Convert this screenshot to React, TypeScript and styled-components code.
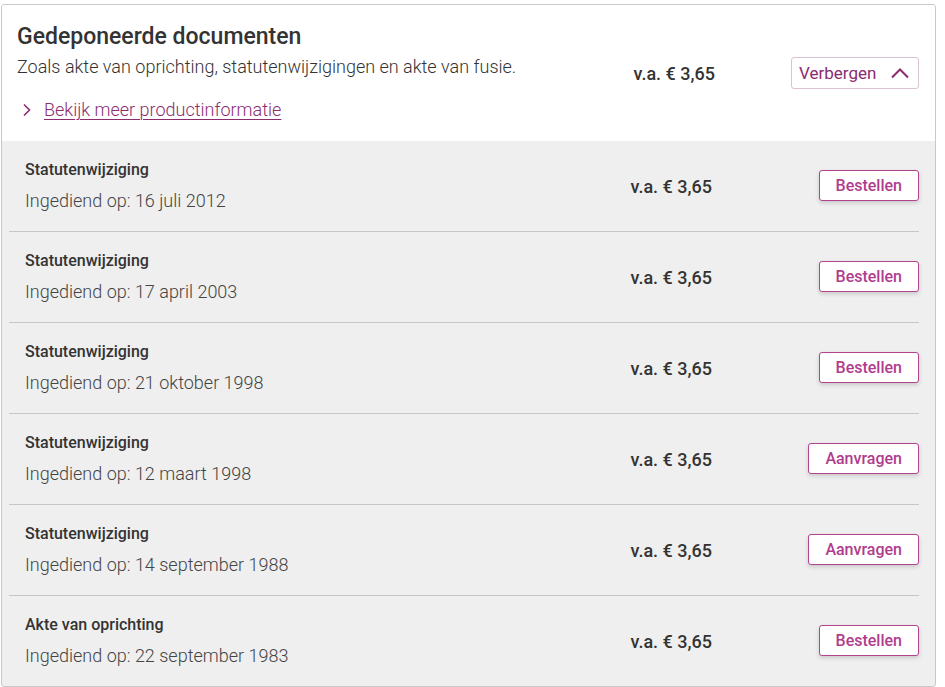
import React from "react";
import styled, { createGlobalStyle } from "styled-components";

const Global = createGlobalStyle`
  html, body { margin: 0; padding: 0; background: #ffffff; }
  body { font-family: Roboto, "Noto Sans", Arial, sans-serif; color: #333; }
  * { box-sizing: border-box; }
`;

const Page = styled.div`
  padding: 4px 0 0 1px;
`;

const Card = styled.section`
  width: 935px;
  border: 1px solid #c9c9c9;
  border-radius: 3px;
  overflow: hidden;
  background: #efefef;
`;

const Header = styled.header`
  background: #fff;
  display: flex;
  align-items: flex-start;
  padding: 18px 16px 0 15px;
  height: 136px;
`;

const HeaderInfo = styled.div`
  flex: 1;
  display: flex;
  flex-direction: column;
`;

const Title = styled.h2`
  margin: 0;
  font-size: 23px;
  line-height: 28px;
  font-weight: 500;
  color: #333;
`;

const Subtitle = styled.p`
  margin: 5px 0 0;
  font-size: 18px;
  line-height: 22px;
  font-weight: 300;
  color: #333;
`;

const MoreLink = styled.a`
  margin-top: 21px;
  display: inline-flex;
  align-items: center;
  gap: 13px;
  padding-left: 5px;
  font-size: 18px;
  line-height: 22px;
  font-weight: 300;
  color: #8b2c6f;
  text-decoration: none;
  span {
    text-decoration: underline;
    text-underline-offset: 3px;
    text-decoration-thickness: 1px;
  }
`;

const Price = styled.div<{ $end: number }>`
  font-size: 18px;
  font-weight: 500;
  color: #333;
  white-space: nowrap;
  margin-right: ${(p) => p.$end}px;
`;

const HeaderAside = styled.div`
  display: flex;
  align-items: center;
  margin-top: 34px;
`;

const ToggleButton = styled.button`
  display: inline-flex;
  align-items: center;
  justify-content: space-between;
  height: 32px;
  width: 128px;
  padding: 0 8px 0 7px;
  background: #fff;
  border: 1px solid #dcc3d4;
  border-radius: 3px;
  font-family: inherit;
  font-size: 17px;
  font-weight: 400;
  color: #8b2c6f;
`;

const List = styled.div`
  padding: 0 16px 0 7px;
`;

const Row = styled.div<{ $last?: boolean }>`
  display: flex;
  align-items: center;
  height: ${(p) => (p.$last ? 90 : 91)}px;
  padding-left: 16px;
  border-bottom: ${(p) => (p.$last ? "none" : "1px solid #c6c6c6")};
`;

const RowInfo = styled.div`
  flex: 1;
  display: flex;
  flex-direction: column;
  gap: 9px;
`;

const RowTitle = styled.div`
  font-size: 16px;
  line-height: 20px;
  font-weight: 500;
  color: #333;
`;

const RowDate = styled.div`
  font-size: 18px;
  line-height: 24px;
  font-weight: 300;
  color: #444;
`;

const ActionCell = styled.div`
  width: 207px;
  display: flex;
  justify-content: flex-end;
  margin-bottom: 1px;
`;

const OrderButton = styled.button`
  height: 31px;
  padding: 0 16px;
  background: #fff;
  border: 1px solid #b3438f;
  border-radius: 3px;
  box-shadow: 0 2px 4px rgba(0, 0, 0, 0.16);
  font-family: inherit;
  font-size: 16px;
  font-weight: 500;
  color: #b03c8e;
`;

const rows = [
  { title: "Statutenwijziging", date: "16 juli 2012", action: "Bestellen" },
  { title: "Statutenwijziging", date: "17 april 2003", action: "Bestellen" },
  { title: "Statutenwijziging", date: "21 oktober 1998", action: "Bestellen" },
  { title: "Statutenwijziging", date: "12 maart 1998", action: "Aanvragen" },
  { title: "Statutenwijziging", date: "14 september 1988", action: "Aanvragen" },
  { title: "Akte van oprichting", date: "22 september 1983", action: "Bestellen" },
];

const ChevronRight = () => (
  <svg width="9" height="14" viewBox="0 0 9 14" fill="none">
    <path d="M2 1.5 L7.5 7 L2 12.5" stroke="#8b2c6f" strokeWidth="1.6" />
  </svg>
);

const ChevronUp = () => (
  <svg width="20" height="12" viewBox="0 0 20 12" fill="none">
    <path d="M2 10.5 L10 2.5 L18 10.5" stroke="#8b2c6f" strokeWidth="2" />
  </svg>
);

export default function App() {
  return (
    <Page>
      <Global />
      <Card>
        <Header>
          <HeaderInfo>
            <Title>Gedeponeerde documenten</Title>
            <Subtitle>Zoals akte van oprichting, statutenwijzigingen en akte van fusie.</Subtitle>
            <MoreLink href="#">
              <ChevronRight />
              <span>Bekijk meer productinformatie</span>
            </MoreLink>
          </HeaderInfo>
          <HeaderAside>
            <Price $end={76}>v.a. € 3,65</Price>
            <ToggleButton>
              Verbergen
              <ChevronUp />
            </ToggleButton>
          </HeaderAside>
        </Header>
        <List>
          {rows.map((r, i) => (
            <Row key={i} $last={i === rows.length - 1}>
              <RowInfo>
                <RowTitle>{r.title}</RowTitle>
                <RowDate>Ingediend op: {r.date}</RowDate>
              </RowInfo>
              <Price $end={0}>v.a. € 3,65</Price>
              <ActionCell>
                <OrderButton>{r.action}</OrderButton>
              </ActionCell>
            </Row>
          ))}
        </List>
      </Card>
    </Page>
  );
}
